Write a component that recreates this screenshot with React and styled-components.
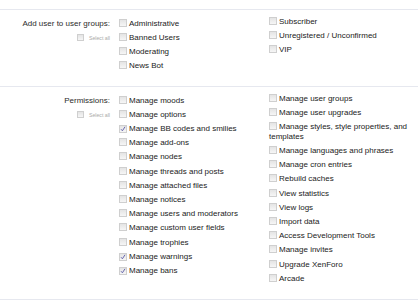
import React from "react";
import styled, { createGlobalStyle } from "styled-components";

const GlobalStyle = createGlobalStyle`
  body {
    margin: 0;
    background: #ffffff;
    font-family: "Liberation Sans", Arial, sans-serif;
  }
`;

const groups = [
  [
    { label: "Administrative" },
    { label: "Banned Users" },
    { label: "Moderating" },
    { label: "News Bot" },
  ],
  [
    { label: "Subscriber" },
    { label: "Unregistered / Unconfirmed" },
    { label: "VIP" },
  ],
];

const permissions = [
  [
    { label: "Manage moods" },
    { label: "Manage options" },
    { label: "Manage BB codes and smilies", checked: true },
    { label: "Manage add-ons" },
    { label: "Manage nodes" },
    { label: "Manage threads and posts" },
    { label: "Manage attached files" },
    { label: "Manage notices" },
    { label: "Manage users and moderators" },
    { label: "Manage custom user fields" },
    { label: "Manage trophies" },
    { label: "Manage warnings", checked: true },
    { label: "Manage bans", checked: true },
  ],
  [
    { label: "Manage user groups" },
    { label: "Manage user upgrades" },
    { label: "Manage styles, style properties, and templates" },
    { label: "Manage languages and phrases" },
    { label: "Manage cron entries" },
    { label: "Rebuild caches" },
    { label: "View statistics" },
    { label: "View logs" },
    { label: "Import data" },
    { label: "Access Development Tools" },
    { label: "Manage invites" },
    { label: "Upgrade XenForo" },
    { label: "Arcade" },
  ],
];

const Box = ({ checked, small }) => (
  <CheckBox $small={small}>
    {checked && (
      <svg width="6" height="6" viewBox="0 0 6 6">
        <path d="M1 3.2 L2.4 4.8 L5 0.8" fill="none" stroke="#5b5ba8" strokeWidth="0.9" />
      </svg>
    )}
  </CheckBox>
);

const Section = ({ title, columns }) => (
  <Row>
    <LabelCell>
      <Title>{title}</Title>
      <SelectAll>
        <Box small />
        <span>Select all</span>
      </SelectAll>
    </LabelCell>
    <Columns>
      {columns.map((col, i) => (
        <List key={i} $shift={i === 1}>
          {col.map((item) => (
            <Item key={item.label}>
              <Box checked={item.checked} />
              {item.label}
            </Item>
          ))}
        </List>
      ))}
    </Columns>
  </Row>
);

const App = () => (
  <>
    <GlobalStyle />
    <Page>
      <Section title="Add user to user groups:" columns={groups} />
      <Section title="Permissions:" columns={permissions} />
    </Page>
  </>
);

export default App;

const Page = styled.div`
  width: 418px;
  padding-top: 9px;
  border-bottom: 1px solid #e6e8ef;
`;

const Row = styled.div`
  display: grid;
  grid-template-columns: 110px 1fr;
  column-gap: 9px;
  padding: 8.5px 0 15.5px;
  border-top: 1px solid #e6e8ef;
`;

const LabelCell = styled.div`
  display: flex;
  flex-direction: column;
  align-items: flex-end;
  gap: 6px;
`;

const Title = styled.div`
  font-size: 8px;
  line-height: 9.4px;
  color: #2b2b2b;
`;

const SelectAll = styled.div`
  display: flex;
  align-items: center;
  gap: 3px;
  font-size: 5.2px;
  line-height: 8px;
  color: #aaa;
`;

const Columns = styled.div`
  display: grid;
  grid-template-columns: 150px 1fr;
  align-items: start;
`;

const List = styled.ul`
  list-style: none;
  margin: ${(p) => (p.$shift ? "-1.5px" : "0")} 0 0;
  padding: 0;
  display: flex;
  flex-direction: column;
  gap: 4.8px;
`;

const Item = styled.li`
  display: block;
  font-size: 8px;
  line-height: 9.4px;
  color: #222;
  padding-right: 6px;
`;

const CheckBox = styled.span`
  box-sizing: border-box;
  display: inline-flex;
  align-items: center;
  justify-content: center;
  vertical-align: ${(p) => (p.$small ? "middle" : "-1px")};
  width: ${(p) => (p.$small ? "7px" : "8px")};
  height: ${(p) => (p.$small ? "7px" : "8px")};
  margin-right: 2px;
  border: 1px solid #cfcfcf;
  background: linear-gradient(#e4e4e4, #f6f6f6);
`;
